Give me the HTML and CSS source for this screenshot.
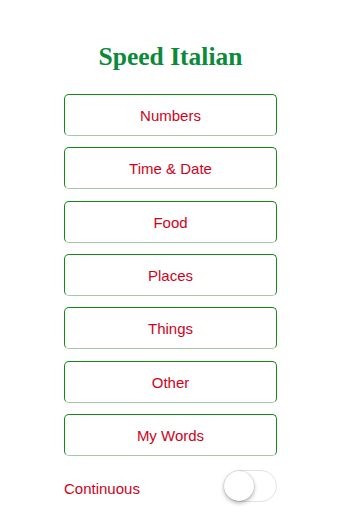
FILE: index.html
```html
<!DOCTYPE html>
<html>
<head>
<meta charset="utf-8">
<link rel="stylesheet" href="styles.css">
</head>
<body>
<div class="screen">
  <h1 class="title">Speed Italian</h1>
  <div class="menu">
    <div class="btn">Numbers</div>
    <div class="btn">Time &amp; Date</div>
    <div class="btn">Food</div>
    <div class="btn">Places</div>
    <div class="btn">Things</div>
    <div class="btn">Other</div>
    <div class="btn">My Words</div>
  </div>
  <div class="row">
    <span class="label">Continuous</span>
    <div class="toggle"><div class="knob"></div></div>
  </div>
</div>
</body>
</html>
```
FILE: styles.css
```css
html, body {
  margin: 0;
  padding: 0;
  background: #ffffff;
}
.screen {
  width: 341px;
  height: 512px;
  display: flex;
  flex-direction: column;
  align-items: center;
  padding-top: 42px;
  box-sizing: border-box;
  font-family: "Liberation Sans", Arial, sans-serif;
}
.title {
  margin: 0;
  font-family: "Liberation Serif", "Times New Roman", serif;
  font-weight: bold;
  font-size: 25.5px;
  line-height: 30px;
  color: #0b8a3a;
}
.menu {
  margin-top: 22px;
  display: flex;
  flex-direction: column;
  gap: 11.33px;
  width: 213px;
}
.btn {
  height: 42px;
  box-sizing: border-box;
  border: 1px solid #138a13;
  border-bottom-color: #a3c9a3;
  border-radius: 5px;
  display: flex;
  align-items: center;
  justify-content: center;
  font-size: 15px;
  color: #d0021b;
  padding-top: 1px;
}
.row {
  margin-top: 15px;
  width: 213px;
  height: 31px;
  display: flex;
  align-items: center;
  justify-content: space-between;
}
.label {
  font-size: 15px;
  color: #d0021b;
  padding-top: 4px;
}
.toggle {
  width: 53px;
  height: 32px;
  box-sizing: border-box;
  border: 1.5px solid #e3e3e3;
  border-radius: 16px;
  background: #fff;
  position: relative;
}
.knob {
  position: absolute;
  left: -1px;
  top: -0.5px;
  width: 30px;
  height: 30px;
  border-radius: 50%;
  background: #fff;
  box-shadow: 0 2px 4px rgba(0,0,0,0.3), 0 0 0 0.5px rgba(0,0,0,0.12);
}
```
